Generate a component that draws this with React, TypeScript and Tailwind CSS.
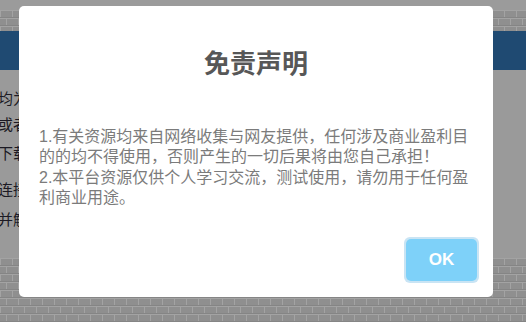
import React from 'react'

const font = { fontFamily: '"Liberation Sans", "Noto Sans CJK SC", sans-serif' }

function Bricks({ className }: { className: string }) {
  return (
    <div className={`relative overflow-hidden bg-[#8e8e8e] ${className}`}>
      <svg className="absolute inset-0 h-full w-full" xmlns="http://www.w3.org/2000/svg">
        <defs>
          <pattern id="brick" width="24" height="16" patternUnits="userSpaceOnUse">
            <rect width="24" height="16" fill="#8f8f8f" />
            <path d="M0 0.5H24M0 8.5H24M0.5 0V8M12.5 0V8M6.5 8V16M18.5 8V16" stroke="#a3a3a3" strokeWidth="1" />
            <path d="M0 7.5H24M0 15.5H24" stroke="#858585" strokeWidth="1" />
          </pattern>
        </defs>
        <rect width="100%" height="100%" fill="url(#brick)" />
      </svg>
    </div>
  )
}

export default function App() {
  const sideLines = [
    { t: '均为', top: 'mt-[19px]' },
    { t: '或者', top: 'mt-[6px]' },
    { t: '下载', top: 'mt-[9px]' },
    { t: '连接', top: 'mt-[16px]' },
    { t: '并解', top: 'mt-[10px]' },
  ]
  return (
    <div className="relative h-[322px] w-[526px] overflow-hidden bg-[#9a9a9a]" style={font}>
      {/* dimmed page behind the dialog */}
      <div className="flex h-full flex-col">
        <div className="h-[10px] bg-[#9b9b9b]" />
        <Bricks className="h-[21px]" />
        <div className="h-[39px] bg-[#1f4a72]" />
        <div className="flex h-[188px] flex-col bg-[#9a9a9a] text-[15px] leading-[20px] text-[#1c1a24]">
          {sideLines.map((l) => (
            <div key={l.t} className={`${l.top} -ml-[2px] whitespace-nowrap`}>
              {l.t}
            </div>
          ))}
        </div>
        <Bricks className="flex-1" />
      </div>

      {/* dialog */}
      <div className="absolute left-[19px] top-[6px] flex h-[291px] w-[474px] flex-col rounded-[5px] bg-white">
        <h2 className="mt-[42px] text-center text-[26px] font-bold leading-[32px] text-[#575757]">
          免责声明
        </h2>
        <div className="mt-[47px] px-[20px] text-[16px] leading-[20.4px] text-[#7b7b7b]">
          <p>1.有关资源均来自网络收集与网友提供，任何涉及商业盈利目的的均不得使用，否则产生的一切后果将由您自己承担！</p>
          <p>2.本平台资源仅供个人学习交流，测试使用，请勿用于任何盈利商业用途。</p>
        </div>
        <div className="mt-auto flex justify-end pb-[14px] pr-[14px]">
          <button className="h-[46px] w-[75px] rounded-[6px] bg-[#c9e4f4] p-[2px]">
            <span className="flex h-full w-full items-center justify-center rounded-[5px] bg-[#7ed1f9] text-[17px] font-bold text-white">
              OK
            </span>
          </button>
        </div>
      </div>
    </div>
  )
}
